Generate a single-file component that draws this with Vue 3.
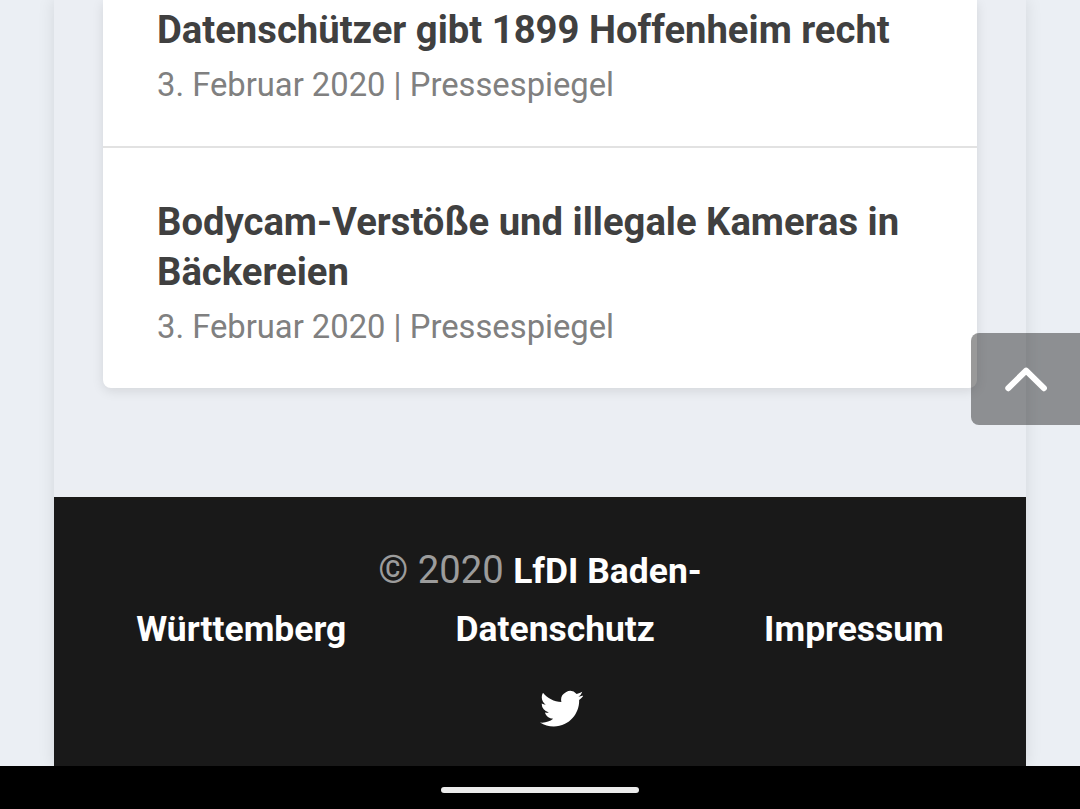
<template>
  <div class="screen">
    <div class="page">
      <main class="content">
        <div class="card">
          <article v-for="post in posts" :key="post.title" class="post">
            <h3>{{ post.title }}</h3>
            <p>{{ post.date }} | {{ post.category }}</p>
          </article>
        </div>
      </main>
      <footer class="footer">
        <div class="copyright"><span>© 2020 </span><a>LfDI Baden-</a></div>
        <nav class="links">
          <a v-for="link in links" :key="link">{{ link }}</a>
        </nav>
        <svg class="twitter" viewBox="0 0 24 24">
          <path d="M23.95 4.57a10 10 0 0 1-2.82.77 4.96 4.96 0 0 0 2.16-2.72c-.95.55-2 .95-3.13 1.18a4.92 4.92 0 0 0-8.38 4.48C7.69 8.09 4.07 6.13 1.64 3.16a4.82 4.82 0 0 0-.67 2.48c0 1.71.87 3.21 2.19 4.1a4.9 4.9 0 0 1-2.23-.62v.06a4.92 4.92 0 0 0 3.95 4.83 5 5 0 0 1-2.21.08 4.94 4.94 0 0 0 4.6 3.42A9.87 9.87 0 0 1 0 19.54a13.99 13.99 0 0 0 7.56 2.21c9.05 0 14-7.5 14-13.98 0-.21 0-.42-.02-.63a9.94 9.94 0 0 0 2.46-2.55z" />
        </svg>
      </footer>
    </div>
    <div class="system-bar"><span></span></div>
    <button class="to-top" aria-label="Nach oben">
      <svg viewBox="0 0 44 26"><path d="M4.3 22.2 22.1 4.6l17.8 17.6" /></svg>
    </button>
  </div>
</template>

<script setup>
const posts = [
  { title: 'Datenschützer gibt 1899 Hoffenheim recht', date: '3. Februar 2020', category: 'Pressespiegel' },
  { title: 'Bodycam-Verstöße und illegale Kameras in Bäckereien', date: '3. Februar 2020', category: 'Pressespiegel' },
];
const links = ['Württemberg', 'Datenschutz', 'Impressum'];
</script>

<style>
body {
  margin: 0;
  overflow: hidden;
}
</style>

<style scoped>
.screen {
  position: relative;
  display: flex;
  flex-direction: column;
  height: 809px;
  overflow: hidden;
  background: #ebeff4;
  font-family: Roboto, "Liberation Sans", sans-serif;
}
.page {
  flex: 1;
  display: flex;
  flex-direction: column;
  width: 972px;
  margin: 0 auto;
  box-shadow: 0 0 16px rgba(0, 0, 0, 0.1);
}
.content {
  box-sizing: border-box;
  height: 497px;
  padding: 0 49px;
  background: #ebeef3;
}
.card {
  box-sizing: border-box;
  height: 388px;
  background: #fff;
  border-radius: 0 0 8px 8px;
  box-shadow: 0 3px 12px rgba(0, 0, 0, 0.1);
}
.post {
  box-sizing: border-box;
  height: 240px;
  padding: 49px 54px 0;
}
.post:first-child {
  height: 148px;
  padding-top: 5px;
  border-bottom: 2px solid #e2e2e2;
}
h3 {
  margin: 0;
  color: #404040;
  font-size: 38.22px;
  font-weight: 700;
  line-height: 50px;
}
p {
  margin: 8px 0 0;
  color: #808080;
  font-size: 32.76px;
  line-height: 44px;
}
.footer {
  flex: 1;
  display: flex;
  flex-direction: column;
  align-items: center;
  padding-top: 44px;
  background: #191919;
  color: #fff;
}
.copyright {
  font-size: 35.45px;
  line-height: 58px;
}
.copyright span {
  color: #9c9c9c;
  font-size: 38.22px;
}
a {
  font-weight: 700;
}
.links {
  display: flex;
  gap: 109.2px;
  font-size: 35.45px;
  line-height: 58px;
}
.twitter {
  width: 43.6px;
  height: 43.6px;
  margin: 29px 0 0 43px;
  fill: #fff;
}
.system-bar {
  display: flex;
  justify-content: center;
  align-items: center;
  height: 43px;
  background: #000;
  z-index: 1;
}
.system-bar span {
  width: 198px;
  height: 6px;
  margin-top: 5px;
  border-radius: 3px;
  background: #ebebeb;
}
.to-top {
  position: absolute;
  top: 333px;
  right: 0;
  display: flex;
  justify-content: center;
  align-items: center;
  width: 109px;
  height: 92px;
  padding: 0;
  border: 0;
  border-radius: 8px 0 0 8px;
  background: rgba(0, 0, 0, 0.4);
}
.to-top svg {
  width: 44px;
  height: 26px;
  fill: none;
  stroke: #fff;
  stroke-width: 6;
  stroke-linecap: round;
  stroke-linejoin: round;
}
</style>
